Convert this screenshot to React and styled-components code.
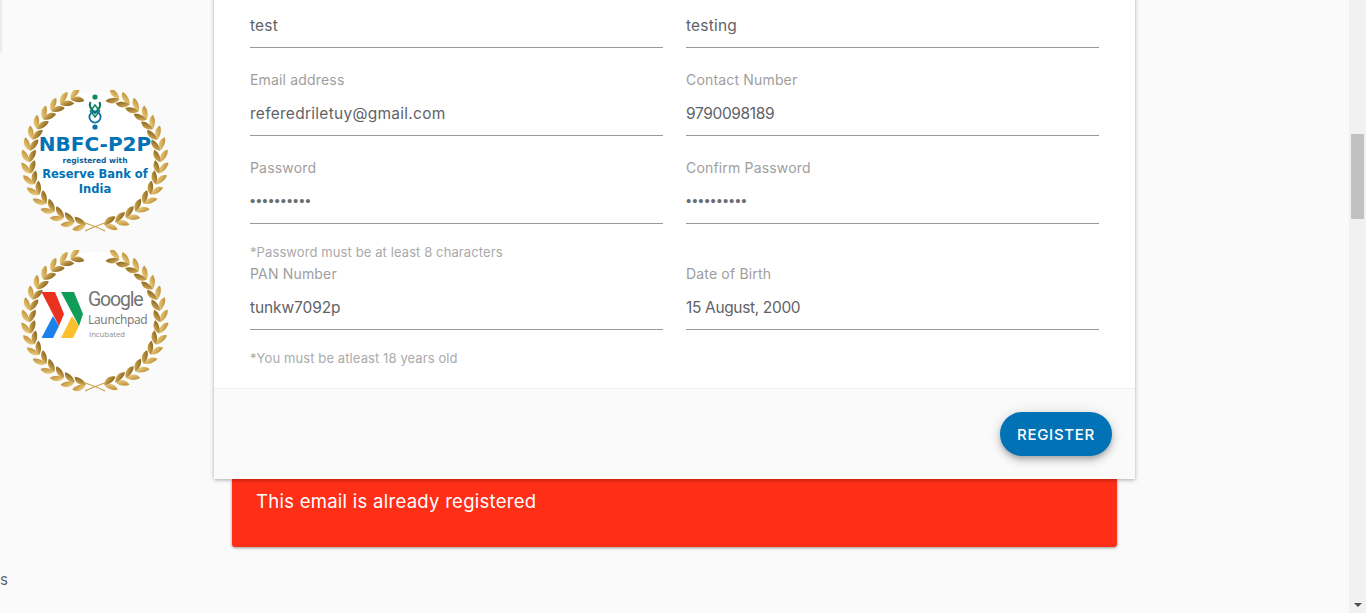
import React from "react";
import styled, { createGlobalStyle } from "styled-components";

const Global = createGlobalStyle`
  html, body { margin: 0; padding: 0; height: 100%; overflow: hidden; background: #fafafa; }
  * { box-sizing: border-box; }
  body { font-family: Inter, "Open Sans", "Liberation Sans", sans-serif; }
`;

const Page = styled.div`
  display: flex;
  width: 1366px;
  height: 613px;
  overflow: hidden;
  background: #fafafa;
`;
const Viewport = styled.div`
  flex: 1;
  display: flex;
  min-width: 0;
`;
const Sidebar = styled.aside`
  width: 214px;
  flex: none;
  display: flex;
  flex-direction: column;
`;
const Stub = styled.div`
  width: 1px;
  height: 52px;
  background: #ececec;
  box-shadow: 0 0 2px rgba(0,0,0,.25);
`;
const BadgeList = styled.div`
  display: flex;
  flex-direction: column;
  gap: 18px;
  margin: 38px 0 0 21px;
`;
const Badge = styled.div`
  position: relative;
  width: 148px;
  height: 142px;
  display: flex;
  flex-direction: column;
  align-items: center;
`;
const WreathSvg = styled.svg`
  position: absolute;
  left: 0;
  top: 0;
`;
const BadgeBody = styled.div`
  position: relative;
  display: flex;
  flex-direction: column;
  align-items: center;
  font-family: "DejaVu Sans", sans-serif;
  font-weight: 700;
  color: #0072b5;
  padding-top: 4px;
  white-space: nowrap;
`;
const Nbfc = styled.div`
  font-size: 20px;
  line-height: 22px;
  margin-top: 3px;
`;
const Registered = styled.div`
  font-size: 7.5px;
  line-height: 11px;
  margin-top: 0;
  color: #0a5f9e;
`;
const Reserve = styled.div`
  font-size: 11.5px;
  line-height: 14px;
  margin-top: 1px;
`;
const GoogleRow = styled.div`
  position: relative;
  display: flex;
  align-self: flex-start;
  gap: 4px;
  margin: 41px 0 0 20px;
`;
const GoogleText = styled.div`
  display: flex;
  flex-direction: column;
  margin-top: -2px;
  font-family: "Open Sans", sans-serif;
  color: #757575;
`;
const GoogleWord = styled.div`
  font-size: 19.5px;
  line-height: 22px;
  letter-spacing: -1.2px;
  font-family: Roboto, sans-serif;
`;
const Launchpad = styled.div`
  font-size: 12px;
  line-height: 17px;
  letter-spacing: -0.3px;
`;
const Incubated = styled.div`
  font-size: 7.7px;
  line-height: 10px;
  margin-top: 1px;
  padding-left: 1px;
  color: #8d8d8d;
`;
const Stray = styled.div`
  margin-top: 178px;
  font-size: 15px;
  line-height: 20px;
  color: #5b6670;
`;
const Center = styled.main`
  width: 921px;
  flex: none;
  display: flex;
  flex-direction: column;
  margin-top: -10px;
`;
const Card = styled.section`
  position: relative;
  z-index: 1;
  background: #fff;
  box-shadow: 0 1px 4px rgba(0,0,0,.32);
  height: 489px;
  display: flex;
  flex-direction: column;
`;
const Form = styled.div`
  flex: 1;
  padding: 12px 36px 0;
`;
const Row = styled.div`
  display: grid;
  grid-template-columns: 413px 413px;
  column-gap: 23px;
`;
const Field = styled.div`
  height: 88px;
  padding-top: 22px;
  display: flex;
  flex-direction: column;
`;
const TopField = styled(Field)`
  height: 46px;
  padding-top: 0;
`;
const PanField = styled(Field)`
  height: 69px;
  padding-top: 3px;
`;
const Label = styled.label`
  font-size: 14px;
  line-height: 20px;
  height: 20px;
  letter-spacing: .17px;
  color: #9e9e9e;
`;
const Value = styled.div`
  height: 46px;
  padding-top: 10px;
  border-bottom: 1px solid #9a9a9a;
  font-size: 15.5px;
  line-height: 28px;
  color: #5f6368;
  letter-spacing: ${p => p.$spacing ?? 0.15}px;
`;
const Dots = styled.span`
  font-family: "Liberation Sans", sans-serif;
  font-size: 15px;
  letter-spacing: .9px;
  color: #6a6e72;
  position: relative;
  top: -1px;
`;
const Hint = styled.div`
  font-size: 13px;
  line-height: 18px;
  height: 18px;
  margin-top: 19px;
  letter-spacing: .1px;
  color: #aaaaaa;
`;
const Footer = styled.footer`
  height: 91px;
  flex: none;
  display: flex;
  justify-content: flex-end;
  align-items: flex-start;
  padding: 23px 23px 0 0;
  background: #fafafa;
  border-top: 1px solid #eeeeee;
`;
const RegisterButton = styled.button`
  width: 112px;
  height: 44px;
  border: 0;
  border-radius: 22px;
  background: #0072b5;
  color: #fff;
  font-family: inherit;
  font-size: 15px;
  font-weight: 450;
  letter-spacing: .7px;
  box-shadow: 0 3px 5px -1px rgba(0,0,0,.2), 0 5px 8px rgba(0,0,0,.14), 0 1px 14px rgba(0,0,0,.12);
`;
const Alert = styled.div`
  width: 885px;
  height: 68px;
  margin-left: 18px;
  padding: 9px 24px;
  background: #ff2e17;
  color: #fff;
  font-size: 18.5px;
  line-height: 26px;
  letter-spacing: .27px;
  border-radius: 0 0 3px 3px;
  box-shadow: 0 1px 3px rgba(0,0,0,.4);
`;
const Scrollbar = styled.div`
  position: relative;
  width: 17px;
  flex: none;
  background: #f1f1f1;
  padding: 134px 2px 0;
`;
const Thumb = styled.div`
  height: 85px;
  background: #c1c1c1;
`;
const ArrowDown = styled.div`
  position: absolute;
  left: 5px;
  bottom: 6px;
  width: 0;
  height: 0;
  border-left: 4px solid transparent;
  border-right: 4px solid transparent;
  border-top: 4px solid #505050;
`;

function Leaf({ cx, cy, angle, len, w, fill }) {
  return (
    <path
      transform={`translate(${cx} ${cy}) rotate(${angle})`}
      d={`M0 0 C ${len * 0.3} ${-w} ${len * 0.75} ${-w} ${len} 0 C ${len * 0.75} ${w * 0.6} ${len * 0.3} ${w * 0.6} 0 0 Z`}
      fill={fill}
    />
  );
}

function Wreath({ id }) {
  const cx = 74, cy = 70, r = 65.5;
  const leaves = [];
  const nodes = 16;
  [1, -1].forEach(side => {
    for (let i = 0; i < nodes; i++) {
      const deg = 8 + i * 10;
      const rad = (deg * Math.PI) / 180;
      const x = cx + side * r * Math.sin(rad);
      const y = cy + r * Math.cos(rad);
      const tangent = side === 1 ? -deg : 180 + deg;
      const out = side === 1 ? tangent + 28 : tangent - 28;
      const inn = side === 1 ? tangent - 28 : tangent + 28;
      leaves.push(
        <Leaf key={`${side}o${i}`} cx={x} cy={y} angle={out} len={14.5} w={4.6} fill={`url(#${id}L)`} />,
        <Leaf key={`${side}i${i}`} cx={x} cy={y} angle={inn} len={14} w={4.6} fill={`url(#${id}D)`} />
      );
    }
  });
  return (
    <WreathSvg width="148" height="142" viewBox="0 0 148 142">
      <defs>
        <linearGradient id={`${id}L`} x1="0" y1="0" x2="1" y2="1">
          <stop offset="0" stopColor="#f3d98e" />
          <stop offset="1" stopColor="#b8862c" />
        </linearGradient>
        <linearGradient id={`${id}D`} x1="0" y1="0" x2="1" y2="1">
          <stop offset="0" stopColor="#e2bd66" />
          <stop offset="1" stopColor="#7d5812" />
        </linearGradient>
      </defs>
      <circle cx={cx} cy={cy} r="68" fill="#fff" />
      <path d="M64 141 Q74 136 90 131 M84 141 Q74 136 58 131" stroke="#c9a055" strokeWidth="1.2" fill="none" />
      {leaves}
    </WreathSvg>
  );
}

function RbiMark() {
  return (
    <svg width="16" height="36" viewBox="0 0 16 36">
      <circle cx="8" cy="3" r="2.6" fill="#0b8a5e" />
      <path d="M3.5 8 C1.5 12 4 15 8 19 C12 15 14.5 12 12.5 8" fill="none" stroke="#0b6e63" strokeWidth="2" />
      <path d="M8 11 L12.5 17 L8 23 L3.5 17 Z" fill="none" stroke="#0b8a5e" strokeWidth="1.6" />
      <circle cx="8" cy="23" r="5.6" fill="none" stroke="#0a72a8" strokeWidth="1.8" />
      <circle cx="8" cy="33" r="2.6" fill="#0a72a8" />
    </svg>
  );
}

function LaunchpadMark() {
  return (
    <svg width="43" height="48" viewBox="0 0 43 48">
      <path d="M12 25 L18 35 L12 47 H0.5 Z" fill="#1a80ec" />
      <path d="M0.5 1 H14 L23 23 L18 35 Z" fill="#e8321f" />
      <path d="M31 25 L38 35 L32 47 H20 Z" fill="#fbc02d" />
      <path d="M20 1 H33 L42 23 L38 35 Z" fill="#0f9d58" />
    </svg>
  );
}

export default function App() {
  return (
    <Page>
      <Global />
      <Viewport>
        <Sidebar>
          <Stub />
          <BadgeList>
            <Badge>
              <Wreath id="goldA" />
              <BadgeBody>
                <RbiMark />
                <Nbfc>NBFC-P2P</Nbfc>
                <Registered>registered with</Registered>
                <Reserve>Reserve Bank of</Reserve>
                <Reserve>India</Reserve>
              </BadgeBody>
            </Badge>
            <Badge>
              <Wreath id="goldB" />
              <GoogleRow>
                <LaunchpadMark />
                <GoogleText>
                  <GoogleWord>Google</GoogleWord>
                  <Launchpad>Launchpad</Launchpad>
                  <Incubated>Incubated</Incubated>
                </GoogleText>
              </GoogleRow>
            </Badge>
          </BadgeList>
          <Stray>s</Stray>
        </Sidebar>
        <Center>
          <Card>
            <Form>
              <Row>
                <TopField>
                  <Value $spacing={0.2}>test</Value>
                </TopField>
                <TopField>
                  <Value $spacing={0.2}>testing</Value>
                </TopField>
              </Row>
              <Row>
                <Field>
                  <Label>Email address</Label>
                  <Value $spacing={0.27}>referedriletuy@gmail.com</Value>
                </Field>
                <Field>
                  <Label>Contact Number</Label>
                  <Value $spacing={-0.35}>9790098189</Value>
                </Field>
              </Row>
              <Row>
                <Field>
                  <Label>Password</Label>
                  <Value><Dots>••••••••••</Dots></Value>
                </Field>
                <Field>
                  <Label>Confirm Password</Label>
                  <Value><Dots>••••••••••</Dots></Value>
                </Field>
              </Row>
              <Hint>*Password must be at least 8 characters</Hint>
              <Row>
                <PanField>
                  <Label>PAN Number</Label>
                  <Value $spacing={-0.1}>tunkw7092p</Value>
                </PanField>
                <PanField>
                  <Label>Date of Birth</Label>
                  <Value $spacing={-0.35}>15 August, 2000</Value>
                </PanField>
              </Row>
              <Hint>*You must be atleast 18 years old</Hint>
            </Form>
            <Footer>
              <RegisterButton>REGISTER</RegisterButton>
            </Footer>
          </Card>
          <Alert>This email is already registered</Alert>
        </Center>
      </Viewport>
      <Scrollbar>
        <Thumb />
        <ArrowDown />
      </Scrollbar>
    </Page>
  );
}
